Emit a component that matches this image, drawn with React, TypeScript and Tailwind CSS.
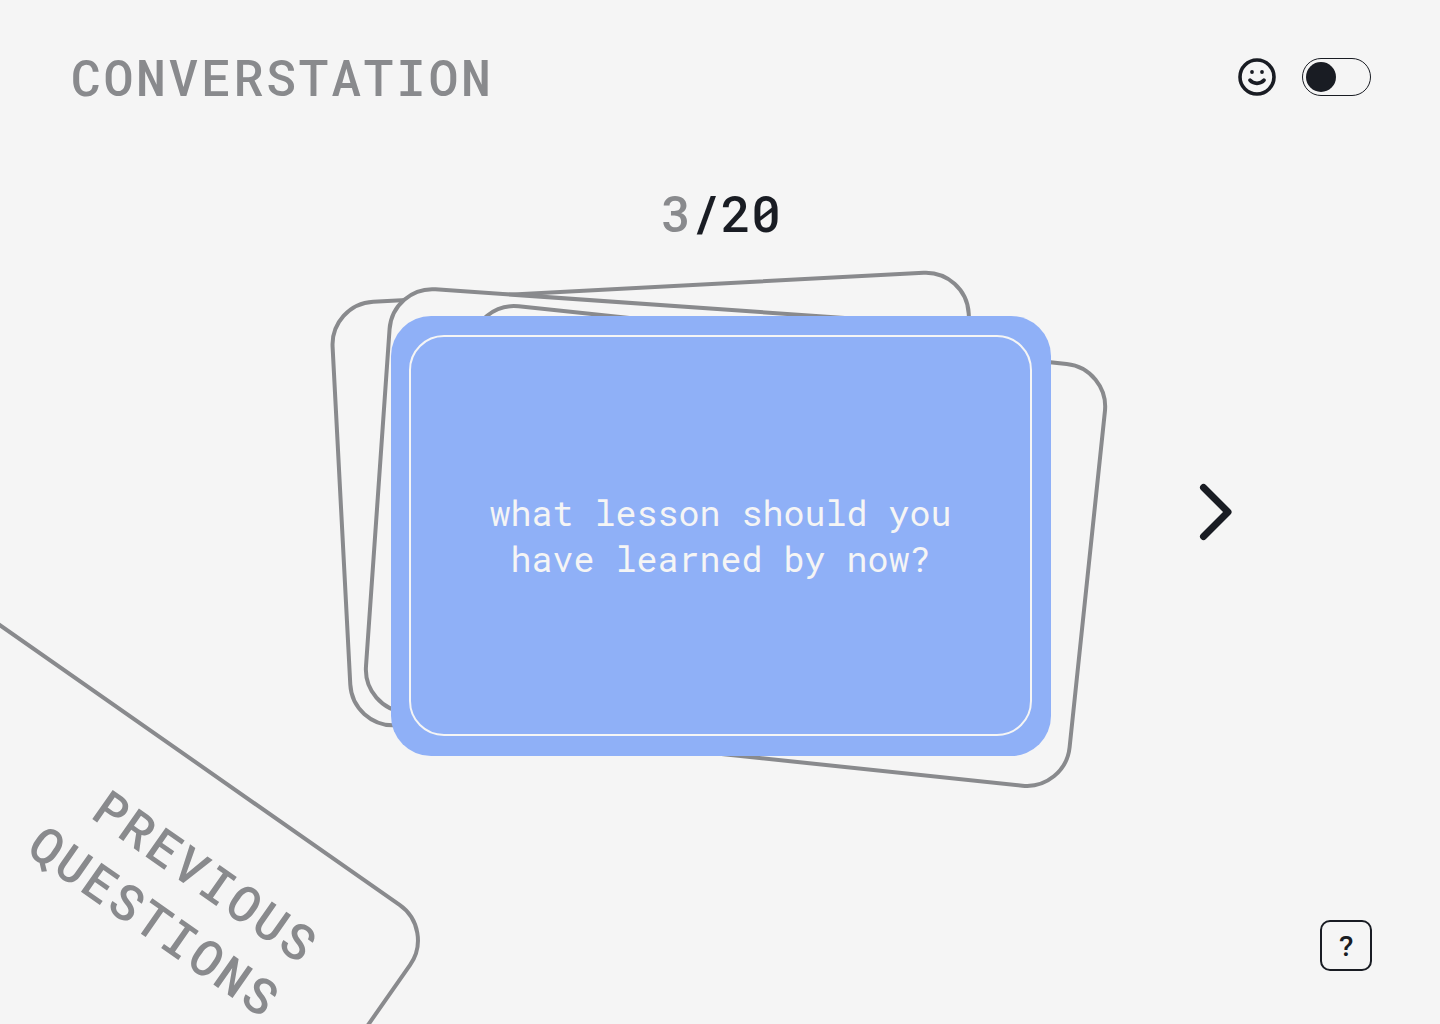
import { useState } from "react";

const questions: string[] = [
  "what made you smile today?",
  "who do you miss the most?",
  "what lesson should you have learned by now?",
];

const TOTAL = 20;

function Smiley() {
  return (
    <svg width="38" height="38" viewBox="0 0 38 38" fill="none" aria-hidden="true">
      <circle cx="19" cy="19" r="17" stroke="#191c23" strokeWidth="3.6" />
      <circle cx="14" cy="14" r="1.9" fill="#191c23" />
      <circle cx="24" cy="14" r="1.9" fill="#191c23" />
      <path d="M12 22.2C15.2 26.3 22.8 26.3 26 22.2" stroke="#191c23" strokeWidth="3.8" strokeLinecap="round" />
    </svg>
  );
}

function Header() {
  return (
    <header className="flex items-center justify-between px-px">
      <h1 className="text-[50px] leading-[66px] font-medium tracking-wider text-[#898a8d]">CONVERSTATION</h1>
      <div className="flex items-center gap-[26px]">
        <Smiley />
        <label className="relative flex h-[38px] w-[69px] cursor-pointer items-center rounded-full border border-[#191c23] px-[3px]">
          <input
            type="checkbox"
            role="switch"
            aria-label="Switch mood"
            className="peer absolute inset-0 cursor-pointer appearance-none rounded-full"
          />
          <span className="size-[30px] rounded-full bg-[#191c23] transition-transform peer-checked:translate-x-8" />
        </label>
      </div>
    </header>
  );
}

function BackCards() {
  return (
    <div aria-hidden="true">
      <div className="absolute top-[-31px] left-[-52px] h-[428px] w-[641px] -rotate-3 rounded-[45px] border-4 border-[#898a8d] bg-[#f5f5f5]" />
      <div className="absolute top-[-10px] left-[-16px] h-[428px] w-[641px] rotate-4 rounded-[45px] border-4 border-[#898a8d] bg-[#f5f5f5]" />
      <div className="absolute top-[16px] left-[59px] h-[428px] w-[641px] rotate-6 rounded-[45px] border-4 border-[#898a8d] bg-[#f5f5f5]" />
    </div>
  );
}

export default function App() {
  const [current, setCurrent] = useState(2);
  const step = (by: number) => setCurrent((c) => (c + by + questions.length) % questions.length);

  return (
    <div className="relative flex min-h-screen flex-col overflow-hidden bg-[#f5f5f5] pt-11 pr-[68px] pb-[53px] pl-[70px] font-['Roboto_Mono','DejaVu_Sans_Mono',monospace] text-[#191c23]">
      <Header />

      <main className="mt-[70px] flex flex-col">
        <p className="text-center text-[50px] leading-[66px] font-medium">
          <span className="text-[#898a8d]">{current + 1}</span>/{TOTAL}
        </p>

        <div className="mt-[70px] grid grid-cols-[1fr_660px_1fr] items-center">
          <section className="relative col-start-2 h-[440px]">
            <BackCards />
            <div className="relative h-full rounded-[40px] bg-[#8fb0f7] pt-[19px] pr-[19px] pb-5 pl-[18px]">
              <div className="flex h-full items-center justify-center rounded-[35px] border-2 border-[#f5f5f5] px-16 pb-0.5">
                <p className="text-center text-[35px] leading-[46px] text-[#f5f5f5]">{questions[current]}</p>
              </div>
            </div>
          </section>
          <div className="flex justify-center pb-12 pl-2">
            <button type="button" aria-label="Next question" onClick={() => step(1)} className="cursor-pointer">
              <svg width="34" height="58" viewBox="0 0 34 58" fill="none" aria-hidden="true">
                <path d="M4.5 4.5L29 29L4.5 53.5" stroke="#191c23" strokeWidth="7" strokeLinecap="round" strokeLinejoin="round" />
              </svg>
            </button>
          </div>
        </div>
      </main>

      <button
        type="button"
        onClick={() => step(-1)}
        className="absolute bottom-[-110px] left-[-267px] flex h-[427px] w-[640px] rotate-[35deg] cursor-pointer items-start justify-end rounded-[45px] border-4 border-[#898a8d] bg-[#f5f5f5] pt-[52px] pr-[86px] text-right text-[50px] leading-[66px] font-medium tracking-wider text-[#898a8d]"
      >
        <span>
          PREVIOUS
          <br />
          QUESTIONS
        </span>
      </button>

      <footer className="mt-auto flex justify-end">
        <button
          type="button"
          aria-label="Help"
          className="flex h-[51px] w-[52px] cursor-pointer items-center justify-center rounded-[10px] border-2 border-[#191c23] text-[28px] leading-none font-medium"
        >
          ?
        </button>
      </footer>
    </div>
  );
}
